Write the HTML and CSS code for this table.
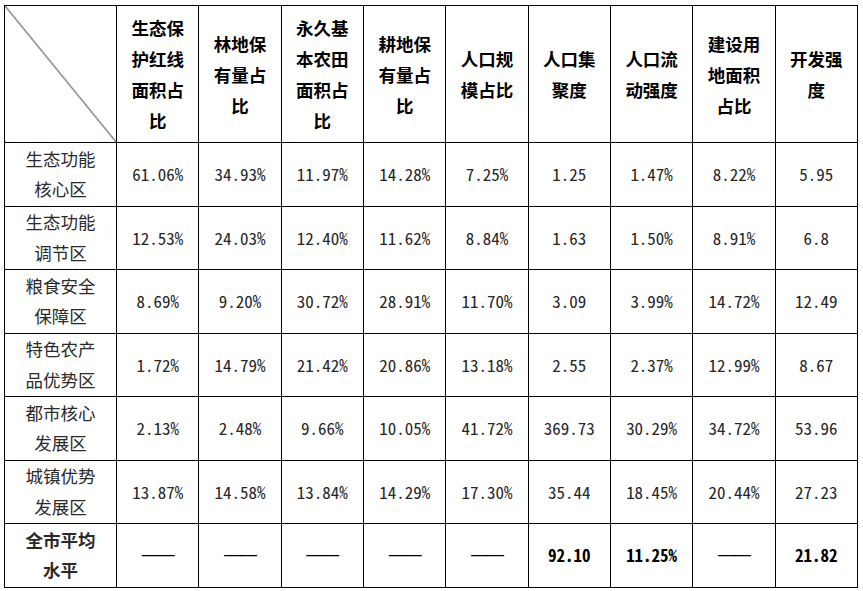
FILE: index.html
```html
<!DOCTYPE html>
<html lang="zh">
<head>
<meta charset="utf-8">
<link rel="stylesheet" href="styles.css">
</head>
<body>
<table class="grid">
  <colgroup>
    <col class="c-name">
    <col class="c-val"><col class="c-val"><col class="c-val"><col class="c-val"><col class="c-val">
    <col class="c-val"><col class="c-val"><col class="c-val"><col class="c-val">
  </colgroup>
  <thead>
    <tr class="head">
      <th class="corner"></th>
      <th>生态保<br>护红线<br>面积占<br>比</th>
      <th>林地保<br>有量占<br>比</th>
      <th>永久基<br>本农田<br>面积占<br>比</th>
      <th>耕地保<br>有量占<br>比</th>
      <th>人口规<br>模占比</th>
      <th>人口集<br>聚度</th>
      <th>人口流<br>动强度</th>
      <th>建设用<br>地面积<br>占比</th>
      <th>开发强<br>度</th>
    </tr>
  </thead>
  <tbody>
    <tr>
      <td class="name">生态功能<br>核心区</td>
      <td>61.06%</td><td>34.93%</td><td>11.97%</td><td>14.28%</td><td>7.25%</td><td>1.25</td><td>1.47%</td><td>8.22%</td><td>5.95</td>
    </tr>
    <tr>
      <td class="name">生态功能<br>调节区</td>
      <td>12.53%</td><td>24.03%</td><td>12.40%</td><td>11.62%</td><td>8.84%</td><td>1.63</td><td>1.50%</td><td>8.91%</td><td>6.8</td>
    </tr>
    <tr>
      <td class="name">粮食安全<br>保障区</td>
      <td>8.69%</td><td>9.20%</td><td>30.72%</td><td>28.91%</td><td>11.70%</td><td>3.09</td><td>3.99%</td><td>14.72%</td><td>12.49</td>
    </tr>
    <tr>
      <td class="name">特色农产<br>品优势区</td>
      <td>1.72%</td><td>14.79%</td><td>21.42%</td><td>20.86%</td><td>13.18%</td><td>2.55</td><td>2.37%</td><td>12.99%</td><td>8.67</td>
    </tr>
    <tr>
      <td class="name">都市核心<br>发展区</td>
      <td>2.13%</td><td>2.48%</td><td>9.66%</td><td>10.05%</td><td>41.72%</td><td>369.73</td><td>30.29%</td><td>34.72%</td><td>53.96</td>
    </tr>
    <tr>
      <td class="name">城镇优势<br>发展区</td>
      <td>13.87%</td><td>14.58%</td><td>13.84%</td><td>14.29%</td><td>17.30%</td><td>35.44</td><td>18.45%</td><td>20.44%</td><td>27.23</td>
    </tr>
    <tr class="total">
      <td class="name">全市平均<br>水平</td>
      <td class="dash">——</td><td class="dash">——</td><td class="dash">——</td><td class="dash">——</td><td class="dash">——</td>
      <td>92.10</td><td>11.25%</td><td class="dash">——</td><td>21.82</td>
    </tr>
  </tbody>
</table>
</body>
</html>
```

FILE: styles.css
```css
html, body {
  margin: 0;
  padding: 0;
  background: #ffffff;
}

body {
  padding: 5px 0 0 4px;
  font-family: "Noto Sans CJK SC", "Noto Sans", sans-serif;
  color: #1a1a1a;
}

.grid {
  border-collapse: collapse;
  table-layout: fixed;
  width: 854px;
}

.c-name {
  width: 112px;
}

.grid th,
.grid td {
  border: 1.3px solid #000;
  padding: 0;
  text-align: center;
  vertical-align: middle;
  font-size: 17px;
  line-height: 30px;
}

.head {
  height: 137px;
}

.head th {
  font-size: 17.5px;
  font-weight: 700;
  color: #000;
  line-height: 31px;
}

.corner {
  background: linear-gradient(to top right, transparent calc(50% - 0.7px), #000 50%, transparent calc(50% + 0.7px));
}

tbody tr {
  height: 63.5px;
}

tbody td {
  font-family: "Noto Sans Mono CJK SC", "Noto Sans CJK SC", sans-serif;
  font-size: 17.5px;
  font-weight: 400;
  letter-spacing: 0;
  color: #262626;
}

tbody td.name {
  font-family: "Noto Sans CJK SC", sans-serif;
  font-size: 17.5px;
  line-height: 30.5px;
  color: #2a2a2a;
}

.total td {
  font-weight: 700;
  color: #000;
}

.total td.dash {
  font-weight: 400;
  font-family: "Liberation Sans", sans-serif;
  letter-spacing: -1px;
}
```
